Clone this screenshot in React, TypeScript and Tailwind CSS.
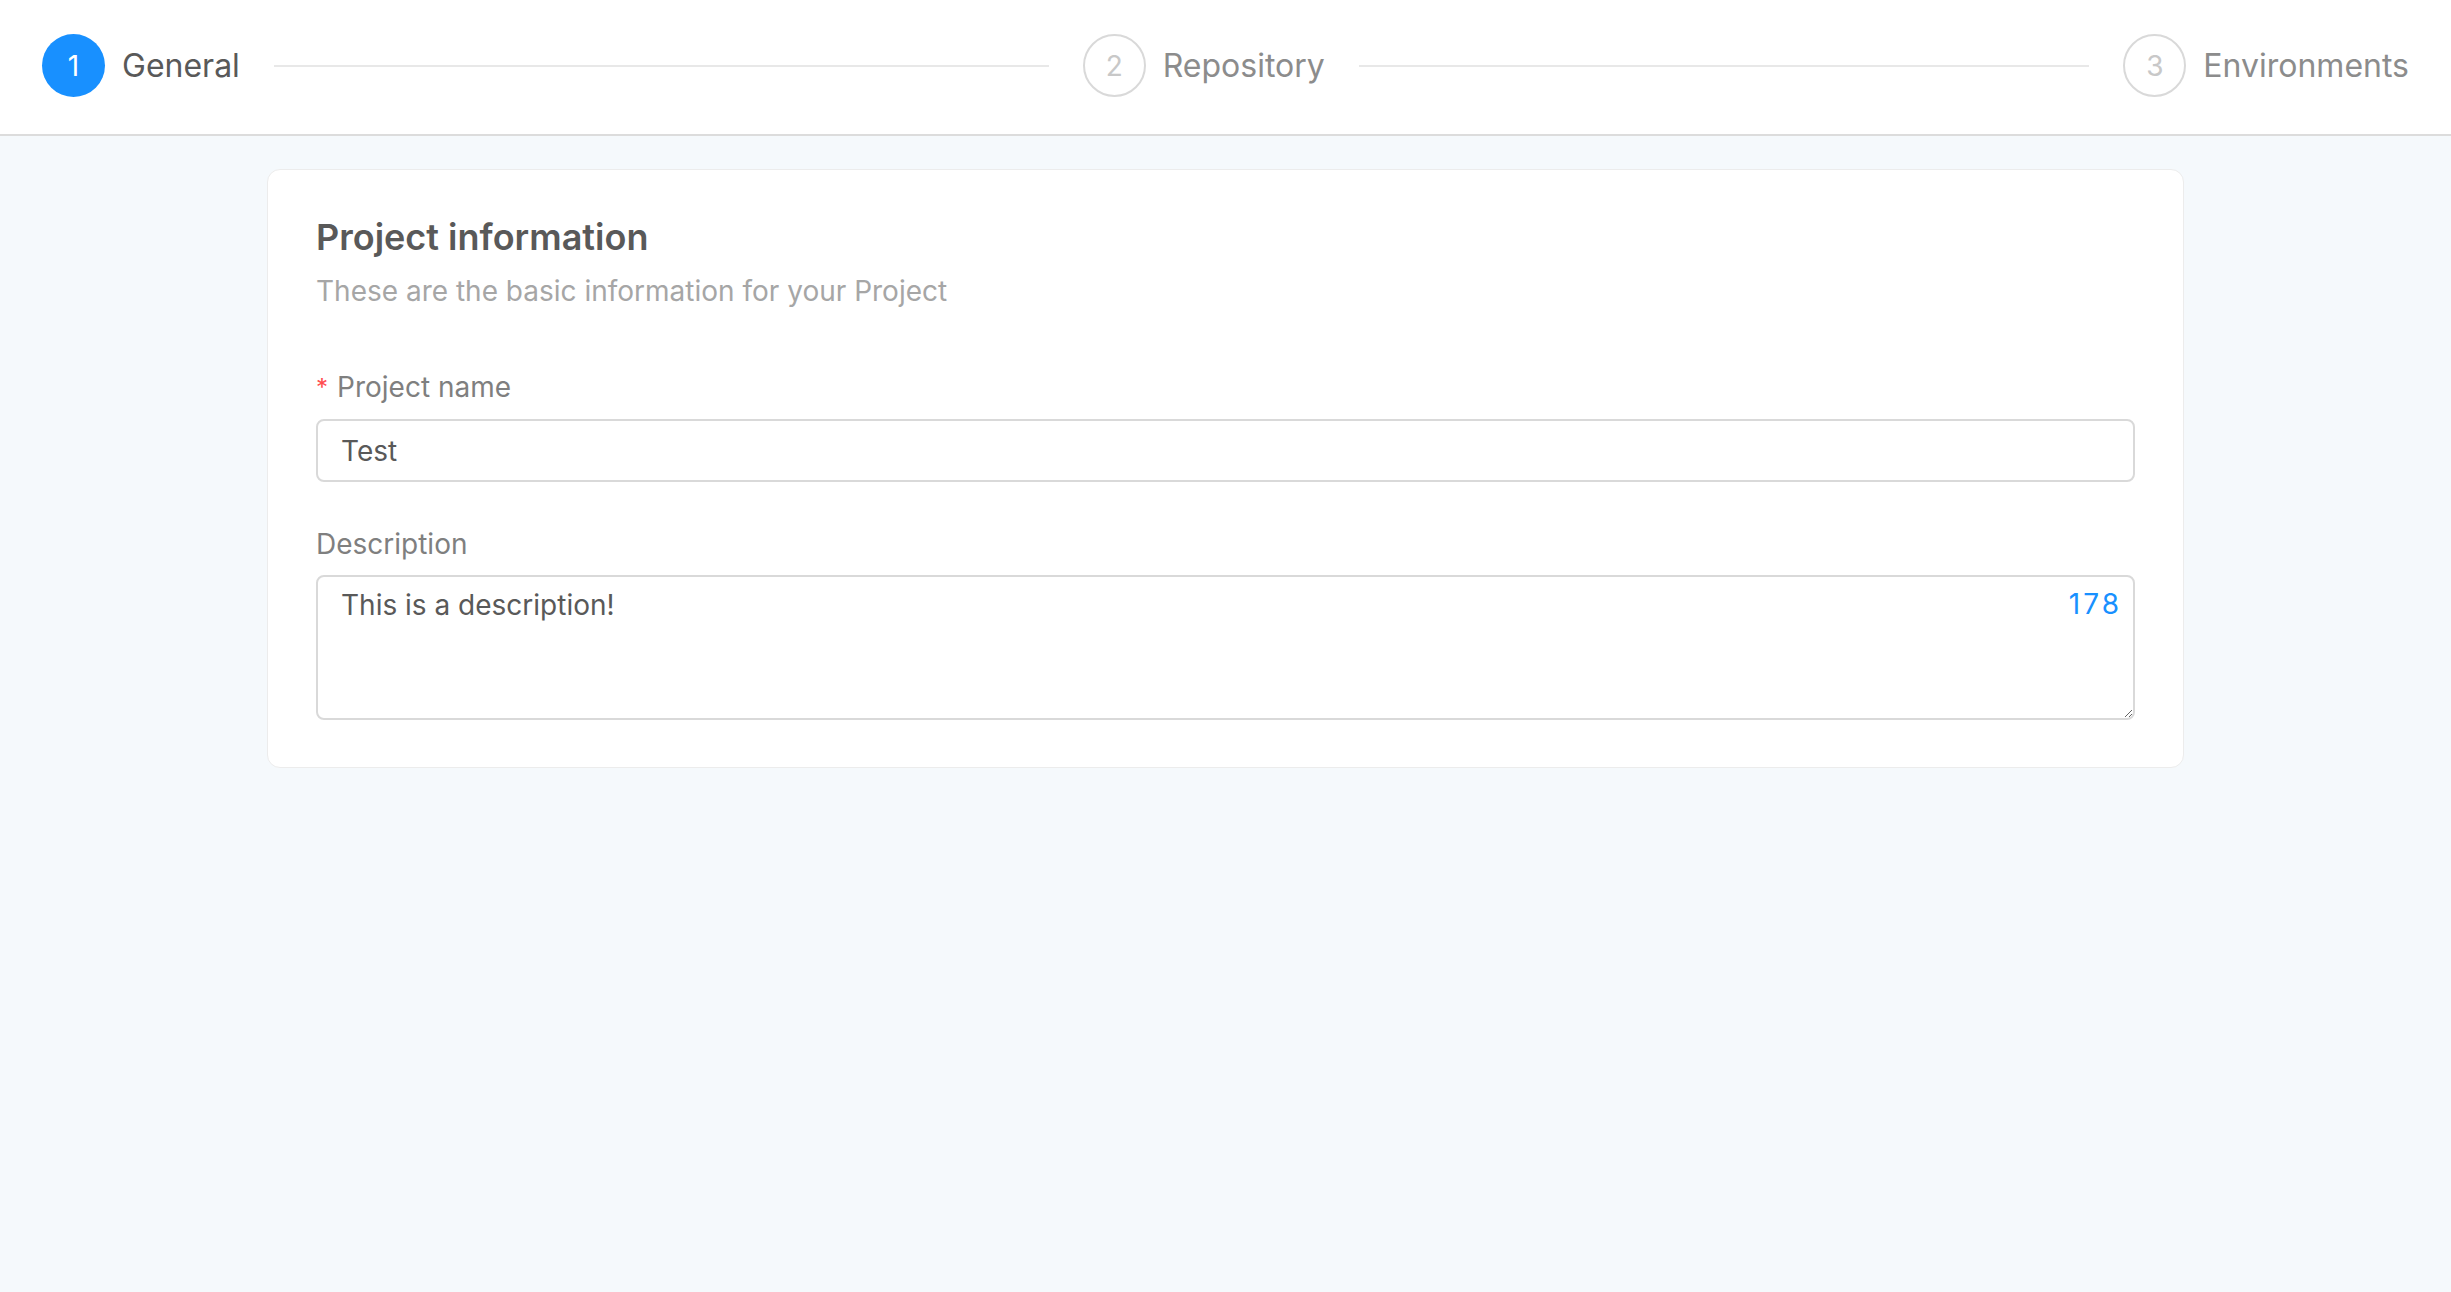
import { useState } from 'react'

const steps = [
  { num: 1, title: 'General' },
  { num: 2, title: 'Repository' },
  { num: 3, title: 'Environments' },
]

function Steps({ current }: { current: number }) {
  return (
    <div className="flex h-full items-center px-[42px] pb-[3px]">
      {steps.map((step, i) => {
        const active = step.num === current
        const last = i === steps.length - 1
        return (
          <div
            key={step.num}
            className={`flex items-center ${last ? 'shrink-0' : 'min-w-0 flex-1'}`}
          >
            <div
              className={`flex h-[63px] w-[63px] shrink-0 items-center justify-center rounded-full text-[28px] ${
                active
                  ? 'bg-[#1890ff] text-white'
                  : 'border-2 border-[#d9d9d9] text-[#c8c8c8]'
              }`}
            >
              {step.num}
            </div>
            <span
              className={`ml-[17px] shrink-0 text-[32px] leading-[48px] ${
                active ? 'text-[#595959]' : 'text-[#8c8c8c]'
              }`}
            >
              {step.title}
            </span>
            {!last && <div className="ml-[34px] mr-[34px] h-[2px] flex-1 bg-[#e8e8e8]" />}
          </div>
        )
      })}
    </div>
  )
}

export default function App() {
  const [name, setName] = useState('Test')
  const [description, setDescription] = useState('This is a description!')

  return (
    <div
      className="min-h-screen bg-[#f5f9fc]"
      style={{ fontFamily: 'Inter, "Noto Sans", sans-serif' }}
    >
      <header className="h-[136px] border-b-2 border-[#dcdcdc] bg-white">
        <Steps current={1} />
      </header>

      <div className="mx-auto mt-[33px] w-[1917px] rounded-[13px] border border-[#ececec] bg-white px-[48px] pb-[47px] pt-[41px]">
        <h2 className="text-[36px] font-semibold leading-[52px] text-[#595959]">
          Project information
        </h2>
        <p className="mt-[10px] text-[28px] leading-[37px] text-[#a6a6a6]">
          These are the basic information for your Project
        </p>

        <label className="mt-[59px] flex items-center text-[28px] leading-[37px] text-[#7f7f7f]">
          <span className="mr-[9px] text-[24px] text-[#ff4d4f]">*</span>
          Project name
        </label>
        <input
          value={name}
          onChange={(e) => setName(e.target.value)}
          className="mt-[13px] block h-[63px] w-full rounded-[8px] border-2 border-[#d9d9d9] bg-white px-[23px] text-[28px] text-[#595959] outline-none"
        />

        <label className="mt-[44px] block text-[28px] leading-[37px] text-[#7f7f7f]">
          Description
        </label>
        <div className="relative mt-[12px]">
          <textarea
            value={description}
            onChange={(e) => setDescription(e.target.value)}
            className="block h-[145px] w-full resize-y rounded-[8px] border-2 border-[#d9d9d9] bg-white px-[23px] pt-[10px] text-[28px] leading-[37px] text-[#595959] outline-none"
          />
          <span className="absolute right-[13px] top-[11px] text-[28px] leading-[37px] tracking-[3px] text-[#1890ff]">
            {200 - description.length}
          </span>
        </div>
      </div>
    </div>
  )
}
